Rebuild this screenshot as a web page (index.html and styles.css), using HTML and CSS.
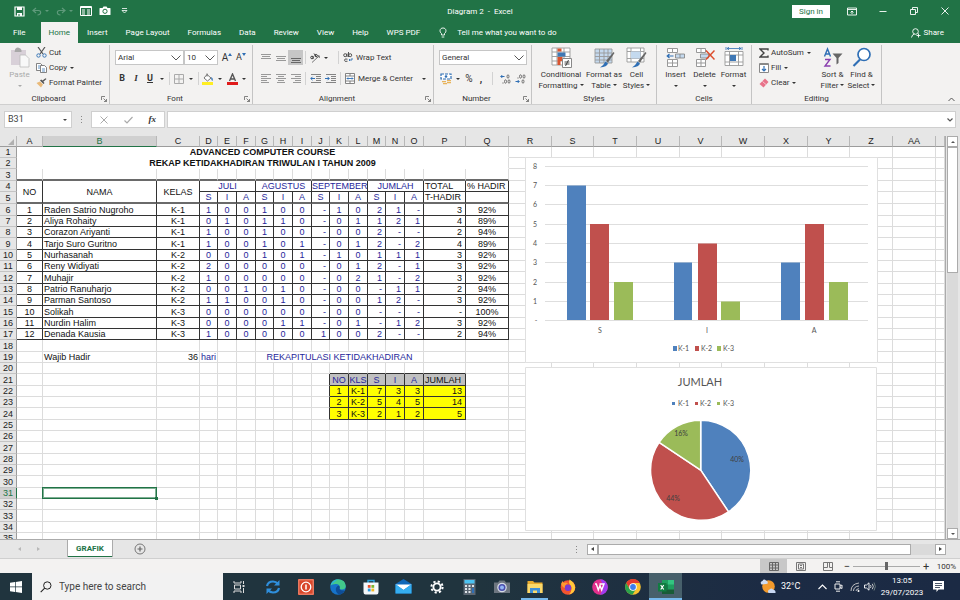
FILE: index.html
```html
<!DOCTYPE html>
<html lang="en">
<head>
<meta charset="utf-8">
<title>Diagram 2 - Excel</title>
<link rel="stylesheet" href="styles.css">
</head>
<body>
<header class="titlebar">
  <div class="quick">
    <button aria-label="Save"><svg width="11" height="11" viewBox="0 0 11 11"><path d="M1 1h9v9H1z" fill="none" stroke="#fff" stroke-width="1.2"/><path d="M3 1h5v3H3zM3 7h5v3H3z" fill="#fff"/><path d="M4.500 8h1v2h-1z" fill="#217346"/></svg></button>
    <button class="dim" aria-label="Undo"><svg width="10" height="9" viewBox="0 0 10 9"><path d="M4 1 1 3.500 4 6M1 3.500h5.500c3 0 3 4.500-1 4.500" fill="none" stroke="currentColor" stroke-width="1.200"/></svg><i class="caret"></i></button>
    <button class="dim" aria-label="Redo"><svg width="10" height="9" viewBox="0 0 10 9"><path d="M6 1l3 2.500L6 6M9 3.500H3.500C.5 3.500.5 8 4.500 8" fill="none" stroke="currentColor" stroke-width="1.200"/></svg><i class="caret"></i></button>
    <button aria-label="Form"><svg width="12" height="10" viewBox="0 0 12 10"><path d="M.5.5h11v9H.5z" fill="none" stroke="#fff"/><path d="M.5 1.500h11" stroke="#fff"/><path d="M2 4h3M2 6h3M2 8h3M7 4h3M7 6h3M7 8h3" stroke="#fff"/></svg></button>
    <button aria-label="Camera"><svg width="12" height="10" viewBox="0 0 12 10"><path d="M1 2h2.500L4.500.5h3L8.500 2H11q.5 0 .5.5v6q0 .5-.5.5H1q-.5 0-.5-.5v-6Q.5 2 1 2z" fill="#fff"/><circle cx="6" cy="5.300" r="2.100" fill="none" stroke="#217346"/></svg></button>
    <button aria-label="Customize"><svg width="7" height="6" viewBox="0 0 7 6"><path d="M1 .5h5M1 2.500h5L3.500 5z" fill="none" stroke="#fff" stroke-width=".8"/></svg></button>
  </div>
  <div class="doc-title">Diagram 2&nbsp; -&nbsp; Excel</div>
  <div class="window">
    <button class="signin">Sign in</button>
    <button aria-label="Ribbon display"><svg width="10" height="9" viewBox="0 0 10 9"><path d="M.5 1h9v7h-9zM.5 2.500h9M5 7V4M3.500 5.500 5 4l1.500 1.500" fill="none" stroke="#fff" stroke-width=".9"/></svg></button>
    <button aria-label="Minimize"><svg width="8" height="8" viewBox="0 0 8 8"><path d="M.5 4.500h7" stroke="#fff" stroke-width=".9"/></svg></button>
    <button aria-label="Restore"><svg width="8" height="8" viewBox="0 0 8 8"><path d="M.5 2.500h5v5h-5zM2.500 2.500v-2h5v5h-2" fill="none" stroke="#fff" stroke-width=".9"/></svg></button>
    <button aria-label="Close"><svg width="8" height="8" viewBox="0 0 8 8"><path d="M.5.5l7 7M7.500.5l-7 7" stroke="#fff" stroke-width=".9"/></svg></button>
  </div>
</header>
<nav class="tabs">
  <a href="#file" class="file">File</a>
  <a href="#home" class="active">Home</a>
  <a href="#insert">Insert</a>
  <a href="#layout">Page Layout</a>
  <a href="#formulas">Formulas</a>
  <a href="#data">Data</a>
  <a href="#review">Review</a>
  <a href="#view">View</a>
  <a href="#help">Help</a>
  <a href="#wps">WPS PDF</a>
  <a href="#tell" class="tell"><svg width="8" height="11" viewBox="0 0 8 11"><path d="M2.500 8V6.500C.2 5 .5 1 4 1s3.800 4 1.500 5.500V8zM2.700 10h2.600" fill="none" stroke="#fff" stroke-width=".9"/></svg>Tell me what you want to do</a>
  <a href="#share" class="share"><svg width="10" height="10" viewBox="0 0 10 10"><circle cx="4.500" cy="3.500" r="2.800" fill="none" stroke="#fff" stroke-width=".9"/><path d="M.5 9.500Q1 6.500 3.500 6M7.500 5.500v4M5.500 7.500h4" fill="none" stroke="#fff" stroke-width=".9"/></svg>Share</a>
</nav>

<section class="ribbon">
  <div class="group g-clip">
    <div class="body">
      <button class="big off"><svg width="20" height="21" viewBox="0 0 20 21"><path d="M1 3h15v15H1z" fill="#d8d0d8"/><path d="M5 3q0-2 3-2.500Q11 1 11.500 3v2H4.500z" fill="#a8a8a8"/><path d="M10 8h5.500l3.500 3.500V20h-9z" fill="#f8f8f8" stroke="#bbb" stroke-width=".8"/></svg><span>Paste</span><i class="caret"></i></button>
      <div class="stack">
        <button><svg width="11" height="11" viewBox="0 0 11 11"><path d="M2 0l5 7M9 0 4 7" stroke="#555" stroke-width="1.200"/><circle cx="2.500" cy="8.500" r="1.700" fill="none" stroke="#3b78b8"/><circle cx="8.500" cy="8.500" r="1.700" fill="none" stroke="#3b78b8"/></svg>Cut</button>
        <button><svg width="11" height="10" viewBox="0 0 11 10"><path d="M.5.500h4l1.500 1.500v5.500H.500z" fill="#fff" stroke="#666" stroke-width=".8"/><path d="M4.500 2.500h4l2 2V9.500h-6z" fill="#fff" stroke="#666" stroke-width=".8"/><path d="M2 3h2M2 5h2M6 6h3M6 8h3" stroke="#3b78b8" stroke-width=".8"/></svg>Copy<i class="caret far"></i></button>
        <button><svg width="11" height="10" viewBox="0 0 11 10"><path d="M.5 5 4 3.500 7 6.500 5 9.500z" fill="#e9b978"/><path d="M4 2.500 7.500 6l1-1-1.200-1.200L10.500 1 9.500.2 6.500 2.500 5.200 1.500z" fill="#555"/></svg>Format Painter</button>
      </div>
    </div>
    <div class="label has-launch">Clipboard<svg class="launch" width="6" height="6" viewBox="0 0 6 6"><path d="M.5 4V.5H4M2.500 2.500l3 3M5.500 3v2.500H3" fill="none" stroke="#666" stroke-width=".8"/></svg></div>
  </div>
  <div class="group g-font">
    <div class="body rows">
      <div class="row">
        <span class="combo c-name"><select aria-label="Font"><option>Arial</option></select><svg width="10" height="6" viewBox="0 0 10 6"><path d="M.5.5 5 5 9.500.5" fill="none" stroke="#444" stroke-width=".9"/></svg></span><span class="combo c-size"><select aria-label="Font size"><option>10</option></select><svg width="10" height="6" viewBox="0 0 10 6"><path d="M.5.5 5 5 9.500.5" fill="none" stroke="#444" stroke-width=".9"/></svg></span>
        <button class="ic grow" aria-label="Increase font">A<svg width="4" height="3" viewBox="0 0 4 3"><path d="M0 3l2-3 2 3z" fill="#2f6fb5"/></svg></button>
        <button class="ic shrink" aria-label="Decrease font">A<svg width="4" height="3" viewBox="0 0 4 3"><path d="M0 0l2 3 2-3z" fill="#2f6fb5"/></svg></button>
      </div>
      <div class="row">
        <button class="ic"><b>B</b></button><button class="ic"><b class="it">I</b></button><button class="ic"><b class="un">U</b></button><i class="ar caret"></i><i class="sep"></i>
        <button class="ic" aria-label="Borders"><svg width="10" height="10" viewBox="0 0 10 10"><path d="M.5.500h9v9h-9zM5 .5v9M.5 5h9" fill="none" stroke="#aaa"/></svg></button><i class="ar caret"></i><i class="sep"></i>
        <button class="ic" aria-label="Fill color"><svg width="12" height="12" viewBox="0 0 12 12"><path d="M5 1.500 9 5 5.500 8 2 5z" fill="#fff" stroke="#666" stroke-width=".9"/><path d="M5 .5v3" stroke="#666"/><path d="M9 4q2.500 1 1.500 4Q9 7 9 4z" fill="#2f6fb5"/><path d="M0 9h11v3H0z" fill="#ffee22"/></svg></button><i class="ar caret"></i>
        <button class="ic" aria-label="Font color"><svg width="11" height="12" viewBox="0 0 11 12"><path d="M2.500 8 5.500 1l3 7M3.500 6h4" fill="none" stroke="#555" stroke-width="1.400"/><path d="M0 9h11v3H0z" fill="#e01b1b"/></svg></button><i class="ar caret"></i>
      </div>
    </div>
    <div class="label has-launch">Font<svg class="launch" width="6" height="6" viewBox="0 0 6 6"><path d="M.5 4V.5H4M2.500 2.500l3 3M5.500 3v2.500H3" fill="none" stroke="#666" stroke-width=".8"/></svg></div>
  </div>
  <div class="group g-align">
    <div class="body rows">
      <div class="row">
        <button class="ic" aria-label="Top"><svg width="10" height="10" viewBox="0 0 10 10"><path d="M0 1.500h10M1 3.500h8M0 5.500h10" stroke="#999"/></svg></button><button class="ic" aria-label="Middle"><svg width="10" height="10" viewBox="0 0 10 10"><path d="M0 3.500h10M1 5.500h8M0 7.500h10" stroke="#999"/></svg></button><button class="ic on" aria-label="Bottom"><svg width="10" height="10" viewBox="0 0 10 10"><path d="M0 5.500h10M1 7.500h8M0 9.500h10" stroke="#666"/></svg></button><i class="sep"></i>
        <button class="ic" aria-label="Orientation"><svg width="11" height="10" viewBox="0 0 11 10"><path d="M2 9.500 9 3M7 2.800h2.300V5" fill="none" stroke="#666" stroke-width=".9"/><circle cx="2" cy="4.500" r="1.300" fill="none" stroke="#444"/><path d="M3 3v3M4 .5l3 4" stroke="#444"/><circle cx="6" cy="2.500" r="1.200" fill="none" stroke="#444" stroke-width=".9"/></svg></button><i class="ar caret"></i><i class="sep"></i>
        <button class="txt"><svg width="10" height="11" viewBox="0 0 10 11"><circle cx="2.200" cy="3.200" r="1.500" fill="none" stroke="#444" stroke-width=".9"/><path d="M4 1.500V5M5.500 0v5M4.500 7.200q-3-1-3 1t3 1" fill="none" stroke="#444" stroke-width=".9"/><circle cx="7.200" cy="3.200" r="1.500" fill="none" stroke="#444" stroke-width=".9"/><path d="M9 6v2H6M7 7 6 8l1 1" fill="none" stroke="#2f6fb5" stroke-width=".9"/></svg>Wrap Text</button>
      </div>
      <div class="row">
        <button class="ic" aria-label="Left"><svg width="10" height="9" viewBox="0 0 10 9"><path d="M0 .5h10M0 2.500h6M0 4.500h10M0 6.500h6M0 8.500h8" stroke="#999"/></svg></button><button class="ic" aria-label="Center"><svg width="10" height="9" viewBox="0 0 10 9"><path d="M0 .5h10M2 2.500h6M0 4.500h10M2 6.500h6M1 8.500h8" stroke="#999"/></svg></button><button class="ic" aria-label="Right"><svg width="10" height="9" viewBox="0 0 10 9"><path d="M0 .5h10M4 2.500h6M0 4.500h10M4 6.500h6M2 8.500h8" stroke="#999"/></svg></button><i class="sep"></i>
        <button class="ic" aria-label="Decrease indent"><svg width="11" height="9" viewBox="0 0 11 9"><path d="M1 .5h10M6 2.500h5M6 4.500h5M6 6.500h5M1 8.500h10" stroke="#777" stroke-width=".9"/><path d="M5 4.500H.8M2.500 2.800.8 4.500l1.700 1.700" fill="none" stroke="#2f6fb5"/></svg></button><button class="ic" aria-label="Increase indent"><svg width="11" height="9" viewBox="0 0 11 9"><path d="M1 .5h10M6 2.500h5M6 4.500h5M6 6.500h5M1 8.500h10" stroke="#777" stroke-width=".9"/><path d="M0 4.500h4.200M2.500 2.800l1.700 1.700-1.700 1.700" fill="none" stroke="#2f6fb5"/></svg></button><i class="sep"></i>
        <button class="txt"><svg width="10" height="11" viewBox="0 0 10 11"><path d="M.5.500h9v10h-9zM.5 3h9M.5 8h9M5 .5V3M5 8v2.500" fill="#fff" stroke="#777" stroke-width=".9"/><path d="M2 5.500h6M3 4.500l-1 1 1 1M7 4.500l1 1-1 1" fill="none" stroke="#2f6fb5" stroke-width=".9"/></svg>Merge &amp; Center<i class="caret far"></i></button>
      </div>
    </div>
    <div class="label has-launch">Alignment<svg class="launch" width="6" height="6" viewBox="0 0 6 6"><path d="M.5 4V.5H4M2.500 2.500l3 3M5.500 3v2.500H3" fill="none" stroke="#666" stroke-width=".8"/></svg></div>
  </div>
  <div class="group g-num">
    <div class="body rows">
      <div class="row"><span class="combo c-fmt"><select aria-label="Number format"><option>General</option></select><svg width="10" height="6" viewBox="0 0 10 6"><path d="M.5.5 5 5 9.500.5" fill="none" stroke="#444" stroke-width=".9"/></svg></span></div>
      <div class="row">
        <button class="ic" aria-label="Currency"><svg width="13" height="12" viewBox="0 0 13 12"><path d="M1 1h10v5H1z" fill="#fff" stroke="#2f6fb5" stroke-width="1.200" stroke-dasharray="3 1"/><circle cx="6" cy="3.500" r="1.300" fill="#2f6fb5"/><path d="M7 7h4v1.200H7zM7 9h4v1.200H7zM2 8h4v1.200H2zM3 10h4v1.200H3z" fill="#e8b35a"/></svg></button><i class="ar caret"></i>
        <button class="ic sym">%</button><button class="ic sym"><b>,</b></button><i class="sep"></i>
        <button class="ic dec" aria-label="Increase decimal"><svg width="11" height="10" viewBox="0 0 11 10"><path d="M4.500 2.500H.8M2.300 1 .8 2.500 2.300 4" fill="none" stroke="#2f6fb5"/><ellipse cx="8" cy="2.500" rx="1" ry="1.700" fill="none" stroke="#555" stroke-width=".8"/><ellipse cx="5.500" cy="7.500" rx="1" ry="1.700" fill="none" stroke="#555" stroke-width=".8"/><ellipse cx="9" cy="7.500" rx="1" ry="1.700" fill="none" stroke="#555" stroke-width=".8"/><path d="M2.500 9h1" stroke="#555"/></svg></button><button class="ic dec" aria-label="Decrease decimal"><svg width="11" height="10" viewBox="0 0 11 10"><path d="M.5 7.500h3.700M2.700 6l1.500 1.500L2.700 9" fill="none" stroke="#2f6fb5"/><ellipse cx="8" cy="7.500" rx="1" ry="1.700" fill="none" stroke="#555" stroke-width=".8"/><ellipse cx="5.500" cy="2.500" rx="1" ry="1.700" fill="none" stroke="#555" stroke-width=".8"/><ellipse cx="9" cy="2.500" rx="1" ry="1.700" fill="none" stroke="#555" stroke-width=".8"/><path d="M2.500 4h1" stroke="#555"/></svg></button>
      </div>
    </div>
    <div class="label has-launch">Number<svg class="launch" width="6" height="6" viewBox="0 0 6 6"><path d="M.5 4V.5H4M2.500 2.500l3 3M5.500 3v2.500H3" fill="none" stroke="#666" stroke-width=".8"/></svg></div>
  </div>
  <div class="group g-styles">
    <div class="body bigs">
      <button class="big b-wide"><svg width="21" height="21" viewBox="0 0 21 21"><path d="M1 1h18v17H1zM1 5h18M1 9.500h18M1 14h18M6 1v17M13 1v17" fill="#fff" stroke="#999" stroke-width=".9"/><path d="M6.500 1.500h4v3h-4zM6.500 10h5v4h-5zM6.500 14h3v4h-3z" fill="#d9542f"/><path d="M6.500 5.500h8v4h-8z" fill="#3f78b5"/><path d="M11.500 11.500h9v9h-9z" fill="#fff" stroke="#888"/><path d="M13.500 15h5M13.500 17h5M17.500 13l-3 6" stroke="#333" stroke-width=".9"/></svg><span>Conditional<br>Formatting<i class="caret"></i></span></button>
      <button class="big b-mid"><svg width="21" height="21" viewBox="0 0 21 21"><path d="M1 2h17v14H1z" fill="#c4d9ee"/><path d="M1 2h17v14H1zM1 6h17M1 9.500h17M1 13h17M5.500 2v14M10 2v14M14 2v14" fill="none" stroke="#999" stroke-width=".9"/><path d="M19.500 5l1 1-6.500 9.500-2-1.500z" fill="#666"/><path d="M11.500 14.500l2.500 2q-1 3.500-8 4 3.500-2 5.500-6z" fill="#2f6fb5"/></svg><span>Format as<br>Table<i class="caret"></i></span></button>
      <button class="big b-slim"><svg width="21" height="21" viewBox="0 0 21 21"><path d="M1 1h17v14H1zM1 4.500h17M1 11.500h17M5 1v14M14.500 1v14" fill="#fff" stroke="#999" stroke-width=".9"/><path d="M5 4.500h9.500v7H5z" fill="#c4d9ee"/><path d="M19.500 5l1 1-6.500 9.500-2-1.500z" fill="#666"/><path d="M11.500 14.500l2.500 2q-1 3.500-8 4 3.500-2 5.500-6z" fill="#2f6fb5"/></svg><span>Cell<br>Styles<i class="caret"></i></span></button>
    </div>
    <div class="label">Styles</div>
  </div>
  <div class="group g-cells">
    <div class="body bigs">
      <button class="big b-slim"><svg width="20" height="21" viewBox="0 0 20 21"><path d="M1.500 1.500h10v4h-10zM6.500 1.500v4M1.500 12.500h10v7h-10zM6.500 12.500v7M1.500 16h10" fill="#fff" stroke="#999"/><path d="M9.500 7h9v4h-9zM14 7v4" fill="#c4d9ee" stroke="#888" stroke-width=".9"/><path d="M7.500 9H1.200M3.500 7 1.200 9l2.300 2" fill="none" stroke="#2f6fb5" stroke-width="1.200"/></svg><span>Insert</span><i class="caret"></i></button>
      <button class="big b-slim"><svg width="20" height="21" viewBox="0 0 20 21"><path d="M1.500 1.500h9v4h-9zM6 1.500v4M1.500 12.500h9v7h-9zM6 12.500v7M1.500 16h9" fill="#fff" stroke="#999"/><path d="M5.500 7h8v4h-8z" fill="#c4d9ee" stroke="#888" stroke-width=".9"/><path d="M11 3.500l8.500 9M19.500 3.500l-8.500 9" stroke="#dc4c2c" stroke-width="1.500"/></svg><span>Delete</span><i class="caret"></i></button>
      <button class="big b-slim"><svg width="20" height="21" viewBox="0 0 20 21"><path d="M1 4.500h18v14H1zM1 8h18M1 15h18M5.500 4.500v14M14.500 4.500v14" fill="#fff" stroke="#999" stroke-width=".9"/><path d="M6 8h6v6H6z" fill="#3f78b5"/><path d="M3 1.500h14M5 .2 3 1.500l2 1.300M15 .2l2 1.300-2 1.300M2 0v3M18 0v3" fill="none" stroke="#2f6fb5" stroke-width=".8"/></svg><span>Format</span><i class="caret"></i></button>
    </div>
    <div class="label">Cells</div>
  </div>
  <div class="group g-edit">
    <div class="body bigs">
      <div class="stack">
        <button><svg width="10" height="10" viewBox="0 0 10 10"><path d="M9 2.500V1H1l4 4-4 4h8V7.500" fill="none" stroke="#444" stroke-width="1.400"/></svg>AutoSum<i class="caret far"></i></button>
        <button><svg width="10" height="10" viewBox="0 0 10 10"><path d="M.5.500h9v9h-9z" fill="#fff" stroke="#888"/><path d="M.5 1.500h9" stroke="#888"/><path d="M5 3v5M3 6l2 2 2-2" fill="none" stroke="#2f6fb5" stroke-width="1.200"/></svg>Fill<i class="caret"></i></button>
        <button><svg width="10" height="10" viewBox="0 0 10 10"><path d="M6 .5 9.500 4 4.500 9.500 .5 6z" fill="#e8738a"/><path d="M3.500 3.500 7 6.500" stroke="#fff" stroke-width=".6"/></svg>Clear<i class="caret"></i></button>
      </div>
      <button class="big b-slim"><svg width="20" height="21" viewBox="0 0 20 21"><path d="M1.500 9.500 4.500 2l3 7.500M2.500 7h4" fill="none" stroke="#2f6fb5" stroke-width="1.400"/><path d="M2 12.500h5L2 19h5.500" fill="none" stroke="#8a3fae" stroke-width="1.400"/><path d="M9.500 6.500h10l-4 4.500v5l-2 1.500V11z" fill="#666"/></svg><span>Sort &amp;<br>Filter<i class="caret"></i></span></button>
      <button class="big b-slim"><svg width="20" height="21" viewBox="0 0 20 21"><circle cx="12" cy="7.500" r="6" fill="#fff" stroke="#2f6fb5" stroke-width="1.700"/><path d="M8 12.500 1.500 19" stroke="#2f6fb5" stroke-width="2.200"/></svg><span>Find &amp;<br>Select<i class="caret"></i></span></button>
    </div>
    <div class="label">Editing</div>
  </div>
  <button class="collapse" aria-label="Collapse ribbon"><svg width="7" height="5" viewBox="0 0 7 5"><path d="M.5 4l3-3 3 3" fill="none" stroke="#555"/></svg></button>
</section>

<section class="formula">
  <div class="namebox"><input aria-label="Name box" value="B31"><i class="caret"></i></div>
  <div class="dots"><i></i><i></i><i></i></div>
  <div class="fx">
    <button aria-label="Cancel"><svg width="8" height="8" viewBox="0 0 8 8"><path d="M.5.5l7 7M7.500.5l-7 7" stroke="#aaa"/></svg></button>
    <button aria-label="Enter"><svg width="9" height="8" viewBox="0 0 9 8"><path d="M.5 4.500 3 7 8.500 1" fill="none" stroke="#aaa" stroke-width="1.200"/></svg></button>
    <button class="fn">fx</button>
  </div>
  <div class="entry"><input aria-label="Formula bar"><svg width="6" height="4" viewBox="0 0 6 4"><path d="M.5.5 3 3 5.500.5" fill="none" stroke="#555" stroke-width="1.200"/></svg></div>
</section>

<main class="work">
  <div class="sheet">
    <table id="grid"></table>
    <svg class="chart bars" width="353" height="206" viewBox="0 0 353 206">
      <path d="M.5 0v205.500h352V0M0 .5h353" fill="#fff" stroke="#e0e0e0"/>
      <path d="M20 9.500h323M20 28.500h323M20 47.500h323M20 67.500h323M20 86.500h323M20 105.500h323M20 125.500h323M20 144.500h323M20 163.500h323" stroke="#dedede"/>
      <g fill="#4f81bd"><path d="M42 28.500h19V163H42zM149 105.500h18V163h-18zM256 105.500h19V163h-19z"/></g>
      <g fill="#c0504d"><path d="M65 67h19v96H65zM173 86.500h19V163h-19zM280 67h19v96h-19z"/></g>
      <g fill="#9bbb59"><path d="M89 125h19v38H89zM196 144.500h19V163h-19zM304 125h19v38h-19z"/></g>
      <g class="axis" text-anchor="middle"><text x="10" y="12">8</text><text x="10" y="31">7</text><text x="10" y="50">6</text><text x="10" y="70">5</text><text x="10" y="89">4</text><text x="10" y="108">3</text><text x="10" y="128">2</text><text x="10" y="147">1</text><text x="11" y="166">-</text><text x="75" y="176">S</text><text x="182" y="176">I</text><text x="289" y="176">A</text></g>
      <path d="M148 189h4v5h-4z" fill="#4f81bd"/><path d="M170 189h4v5h-4z" fill="#c0504d"/><path d="M192 189h4v5h-4z" fill="#9bbb59"/>
      <g class="axis"><text x="153" y="194">K-1</text><text x="176" y="194">K-2</text><text x="198" y="194">K-3</text></g>
    </svg>
    <svg class="chart pie" width="353" height="164" viewBox="0 0 353 164">
      <path d="M.5.500h351v163H.500z" fill="#fff" stroke="#e0e0e0"/>
      <text class="pie-title" x="175" y="19" text-anchor="middle">JUMLAH</text>
      <path d="M147 35h3v3h-3z" fill="#4f81bd"/><path d="M170 35h3v3h-3z" fill="#c0504d"/><path d="M192 35h3v3h-3z" fill="#9bbb59"/>
      <g class="axis"><text x="153" y="39">K-1</text><text x="175" y="39">K-2</text><text x="198" y="39">K-3</text></g>
      <g stroke="#fff" stroke-width="1.500" stroke-linejoin="round">
        <path d="M175.700 103.200V53.200A50 50 0 0 1 203.500 144.800z" fill="#4f81bd"/>
        <path d="M175.700 103.200 203.500 144.800A50 50 0 0 1 134.100 75.400z" fill="#c0504d"/>
        <path d="M175.700 103.200 134.100 75.400A50 50 0 0 1 175.700 53.200z" fill="#9bbb59"/>
      </g>
      <g class="slice" text-anchor="middle"><text x="212" y="95">40%</text><text x="148" y="134">44%</text><text x="156" y="69">16%</text></g>
    </svg>
  </div>
  <div class="vscroll">
    <button aria-label="Scroll up"><i class="up"></i></button>
    <div class="track"><div class="thumb"></div></div>
    <button aria-label="Scroll down"><i class="caret"></i></button>
  </div>
</main>

<section class="sheettabs">
  <div class="arrows"><i class="lf"></i><i class="rt"></i></div>
  <button class="tab">GRAFIK</button>
  <button class="add" aria-label="New sheet"><svg width="12" height="12" viewBox="0 0 12 12"><circle cx="6" cy="6" r="5" fill="none" stroke="#777"/><path d="M3.500 6h5M6 3.500v5" stroke="#666" stroke-width="1.200"/></svg></button>
  <div class="dots"><i></i><i></i><i></i></div>
  <div class="hscroll">
    <button aria-label="Scroll left"><i class="lf"></i></button>
    <div class="htrack"><div class="hthumb"></div></div>
    <button aria-label="Scroll right"><i class="rt"></i></button>
  </div>
</section>

<section class="status">
  <button class="view on" aria-label="Normal"><svg width="10" height="9" viewBox="0 0 10 9"><path d="M.5.500h9v8h-9zM.5 3h9M.5 6h9M3.500.5v8M6.500.5v8" fill="none" stroke="#666"/></svg></button>
  <button class="view" aria-label="Page layout"><svg width="10" height="9" viewBox="0 0 10 9"><path d="M.5.500h9v8h-9zM2.500 2h5v5h-5zM4 3.500h2M4 5.500h2" fill="none" stroke="#777"/></svg></button>
  <button class="view" aria-label="Page break"><svg width="10" height="9" viewBox="0 0 10 9"><path d="M.5.500h9v8h-9zM.5 5.500h4v-5M6.500.5v5h3" fill="none" stroke="#777"/></svg></button>
  <button class="zm">−</button>
  <input type="range" aria-label="Zoom" min="0" max="100" value="50">
  <button class="zm">+</button>
  <span class="pct">100%</span>
</section>

<footer class="taskbar">
  <button class="start" aria-label="Start"><svg width="12" height="12" viewBox="0 0 12 12"><path d="M0 1.700 5 1v4.600H0zM5.700.9 12 0v5.600H5.700zM0 6.300h5V11l-5-.7zM5.700 6.300H12V12l-6.300-.9z" fill="#fff"/></svg></button>
  <label class="search"><svg width="12" height="12" viewBox="0 0 12 12"><circle cx="7.300" cy="4.500" r="3.700" fill="none" stroke="#222"/><path d="M4.700 7.200.7 11.200" stroke="#222" stroke-width="1.100"/></svg><input type="text" placeholder="Type here to search" aria-label="Search"></label>
  <div class="apps">
    <button aria-label="Task view"><svg width="13" height="12" viewBox="0 0 13 12"><path d="M1 0v2h7V0M1 12v-2h7v2M1.500 4h6v4h-6zM10.500 0v3M10.500 7v5" fill="none" stroke="#ddd"/><path d="M9.500 4h2v2h-2z" fill="#ddd"/></svg></button>
    <button aria-label="Sync"><svg width="16" height="16" viewBox="0 0 16 16"><path d="M2 7Q3 2.500 8 2.500q3 0 5 2.500M14 9q-1 4.500-6 4.500-3 0-5-2.500" fill="none" stroke="#2f8fdc" stroke-width="2.200"/><path d="M14.500 1v5.500H9zM1.500 15V9.500H7z" fill="#2f8fdc"/></svg></button>
    <button aria-label="Power"><svg width="16" height="16" viewBox="0 0 16 16"><path d="M0 0h16v16H0z" fill="#d9472b"/><path d="M.8.800h14.400v14.400H.8z" fill="none" stroke="#f0a28e" stroke-width=".8"/><circle cx="8" cy="8" r="4.800" fill="none" stroke="#fff" stroke-width="1.300"/><path d="M8 5.500v5" stroke="#fff" stroke-width="1.500"/></svg></button>
    <button aria-label="Edge"><svg width="16" height="16" viewBox="0 0 16 16"><circle cx="8" cy="8" r="7.800" fill="#1673c9"/><path d="M.5 6.500Q2 0 8.500.2 15.500 1 15.800 7q-.2 3.500-4 3.500-3 0-2-2.500Q9 4.500 5.500 5 2 5.300.5 6.500z" fill="#42c98b"/><path d="M.5 6.500Q2 1 8 .2 4 3 .5 6.500z" fill="#2bb5d9"/><path d="M9.800 8q-1.500 4 5 3.500Q13 15 9 15.700 5 13 6 9q1-2.500 3-2.500z" fill="#0e4d96"/></svg></button>
    <button aria-label="Store"><svg width="16" height="16" viewBox="0 0 16 16"><path d="M5 4V1.500h6V4" fill="none" stroke="#2aa5e0" stroke-width="1.400"/><path d="M.5 3.500h15V13q0 2.500-2 2.500h-11q-2 0-2-2.500z" fill="#f4f7fa"/><path d="M4.800 6h2.800v2.800H4.800z" fill="#e8502c"/><path d="M8.400 6h2.800v2.800H8.400z" fill="#7cb62c"/><path d="M4.800 9.600h2.800v2.800H4.800z" fill="#2b9be0"/><path d="M8.400 9.600h2.800v2.800H8.400z" fill="#f5b820"/></svg></button>
    <button aria-label="Mail"><svg width="17" height="15" viewBox="0 0 17 15"><path d="M.5 5 8.500 0l8 5v9.500H.5z" fill="#1068b8"/><path d="M.5 5.500h16L8.500 11z" fill="#fff"/><path d="M.5 5v9.500h16V5l-8 6z" fill="#35aef0"/></svg></button>
    <button aria-label="Settings"><svg width="14" height="14" viewBox="0 0 14 14"><circle cx="7" cy="7" r="3.600" fill="none" stroke="#fff" stroke-width="1.900"/><circle cx="7" cy="7" r="5.600" fill="none" stroke="#fff" stroke-width="2" stroke-dasharray="2.200 2.200"/></svg></button>
    <button aria-label="Calculator"><svg width="13" height="16" viewBox="0 0 13 16"><path d="M.5 0h12v16H.5z" fill="#5a6672"/><path d="M1.500 1h10v3.500h-10z" fill="#4cc2f1"/><path d="M2 6h2v2H2zM5.500 6h2v2h-2zM9 6h2v2H9zM2 9h2v2H2zM5.500 9h2v2h-2zM2 12h2v2H2zM5.500 12h2v2h-2z" fill="#dfe5ea"/><path d="M9 9h2v5H9z" fill="#2f6fb5"/></svg></button>
    <button aria-label="Camera app"><svg width="16" height="14" viewBox="0 0 16 14"><path d="M0 2.500h4L5.500.5h5l1.500 2h4V13H0z" fill="#6d7680"/><circle cx="8" cy="7.500" r="4.800" fill="#d5dbe5"/><circle cx="8" cy="7.500" r="3.500" fill="#4a4fae"/><circle cx="8" cy="7.500" r="2" fill="#93b6f5"/></svg></button>
    <button class="open" aria-label="File Explorer"><svg width="16" height="14" viewBox="0 0 16 14"><path d="M.5 1H6l1.500 1.500h8V13H.5z" fill="#e9ac2f"/><path d="M.5 4h15v9H.5z" fill="#fbd96b"/><path d="M3 13V8h10v5h-3v-2.500H6V13z" fill="#3f8fd8"/></svg></button>
    <button aria-label="Firefox"><svg width="16" height="16" viewBox="0 0 16 16"><circle cx="8" cy="8.500" r="7.300" fill="#f4552f"/><path d="M9.500.5Q15 4 15.200 8.500 15 14 9 15.500 14 10 9.500 5 8.500 3 9.500.5z" fill="#ffc93a"/><path d="M1 5 2.500 2l1.200 2Q6 3 8 4.500 4.500 6 5 9 3 9 1 5z" fill="#ff9a2e"/><circle cx="8" cy="8.800" r="3.200" fill="#7a3bd0"/></svg></button>
    <button aria-label="WPS Office"><svg width="16" height="16" viewBox="0 0 16 16"><circle cx="8" cy="8" r="7.800" fill="#e1308c"/><path d="M8 .2A7.800 7.800 0 0 1 8 15.800Q14 8 8 .2z" fill="#a03bf0"/><path d="M3 5h1.300L6.300 11 8 6.500 9.700 11 12 5H7.500" fill="none" stroke="#fff" stroke-width="1.400"/></svg></button>
    <button aria-label="Chrome"><svg width="16" height="16" viewBox="0 0 16 16"><circle cx="8" cy="8" r="7.800" fill="#f9c22e"/><path d="M1.200 4.100A7.800 7.800 0 0 1 14.800 4.100H8L4.600 10z" fill="#e33b2e"/><path d="M1.200 4.100A7.800 7.800 0 0 0 7.500 15.800L11 10 8 11.500 4.600 10z" fill="#2ba24c"/><circle cx="8" cy="8" r="3.800" fill="#fff"/><circle cx="8" cy="8" r="2.900" fill="#3b7ded"/></svg></button>
    <button class="open current" aria-label="Excel"><svg width="16" height="14" viewBox="0 0 16 14"><path d="M4 0h12v14H4z" fill="#1f9e5f"/><path d="M10 0h6v4.500h-6z" fill="#33c481"/><path d="M4 4.500h6v5H4z" fill="#18794a"/><path d="M4 9.500h12V14H4z" fill="#185c37"/><path d="M0 3h8.500v8.500H0z" fill="#107c41"/><path d="M2.700 5l3 4.500M5.700 5l-3 4.500" stroke="#fff" stroke-width="1.200"/></svg></button>
  </div>
  <div class="tray">
    <svg width="16" height="15" viewBox="0 0 16 15"><circle cx="8.500" cy="7.500" r="6.300" fill="#f39a2c"/><path d="M1.500 5.500q-2-2.500.8-3.500Q4-.5 6 1.500q2.500.5 1.500 3.200z" fill="#cfdcf2"/><path d="M8.500 14q-1.500-2.500 1-3.500 2-2 3.500 0 3 .5 2.500 3.500z" fill="#c9d8f2"/></svg>
    <span class="temp">32°C</span>
    <svg width="9" height="6" viewBox="0 0 9 6"><path d="M.5 5l4-4 4 4" fill="none" stroke="#fff" stroke-width="1.100"/></svg>
    <svg class="meet" width="9" height="11" viewBox="0 0 9 11"><path d="M1 3h5v5H1zM6 5l2-1v3.500l-2-1M2 .8h4M2 10.200h4" fill="none" stroke="#eee"/></svg>
    <svg width="10" height="10" viewBox="0 0 10 10"><path d="M1 9Q1 2 9 1M3.500 9q0-4.500 5.500-5M6 9q0-2 3-2.300" fill="none" stroke="#ccc" stroke-width=".9"/><circle cx="8.500" cy="9" r="1" fill="#fff"/></svg>
    <svg width="12" height="9" viewBox="0 0 12 9"><path d="M.5 3h2L5 .800v7.400L2.500 6h-2z" fill="none" stroke="#fff" stroke-width=".9"/><path d="M6.500 3q1 1.500 0 3M8.300 1.800q2 2.700 0 5.400" fill="none" stroke="#ddd" stroke-width=".9"/><path d="M10 .5q2.700 4 0 8" fill="none" stroke="#788" stroke-width=".9"/></svg>
    <div class="clock"><span>13:05</span><span>29/07/2023</span></div>
    <svg class="note" width="11" height="11" viewBox="0 0 11 11"><path d="M0 0h11v8.500H5.500L3.500 11V8.500H0z" fill="#fff"/><path d="M2 2.500h7M2 4.500h7M2 6.500h5" stroke="#1d2c42" stroke-width=".8"/></svg>
  </div>
</footer>
<script src="app.js"></script>
</body>
</html>
```
FILE: styles.css
```css
* { box-sizing: border-box; }
html, body { height: 100%; }
body {
  margin: 0;
  display: flex;
  flex-direction: column;
  background: #e6e6e6;
  color: #333;
  font: 8px/11px Roboto, "Open Sans", sans-serif;
  overflow: hidden;
}
button {
  display: flex; align-items: center; justify-content: center;
  margin: 0; padding: 0; border: 0; background: none;
  color: inherit; font: inherit; white-space: nowrap;
}
input, select { font: inherit; color: inherit; border: 0; margin: 0; padding: 0; background: none; min-width: 0; }
a { color: inherit; text-decoration: none; }
svg { display: block; flex: none; }
.caret { flex: none; width: 0; height: 0; border: 2px solid transparent; border-top-color: currentColor; border-bottom: 0; }

/* Title bar */
.titlebar { display: grid; grid-template-columns: 1fr auto 1fr; align-items: center; height: 22px; flex: none; background: #217346; color: #fff; }
.quick { display: flex; align-items: center; padding-left: 13px; gap: 7px; }
.quick button { gap: 4px; min-width: 12px; }
.quick .dim { color: #5f9a7b; gap: 3px; }
.window { display: flex; justify-content: flex-end; align-items: center; }
.window button { width: 31px; height: 20px; }
.window .signin { width: 38px; height: 13px; background: #fff; color: #217346; margin-right: 6px; }

/* Ribbon tabs */
.tabs { display: flex; height: 21px; flex: none; background: #217346; color: #fff; }
.tabs a { display: flex; align-items: center; padding: 0 9px; white-space: nowrap; }
.tabs .file { padding: 0 15px 0 13px; }
.tabs .active { background: #f3f2f1; color: #217346; padding: 0 8px; }
.tabs .tell { padding-left: 10px; gap: 10px; }
.tabs .share { margin-left: auto; padding-right: 16px; gap: 3px; }

/* Ribbon */
.ribbon { display: flex; height: 62px; flex: none; background: #f3f2f1; border-bottom: 1px solid #cfcfcf; }
.group { display: flex; flex-direction: column; border-right: 1px solid #c4c4c4; margin: 2px 0 0; flex: none; }
.body { display: flex; flex: 1; min-height: 0; }
.label { position: relative; text-align: center; height: 11px; flex: none; }
.has-launch { padding-right: 12px; }
.launch { position: absolute; right: 2px; top: 3px; }
.g-clip { width: 110px; }
.g-font { width: 143px; }
.g-align { width: 181px; }
.g-num { width: 98px; }
.g-styles { width: 125px; }
.g-cells { width: 95px; }
.g-edit { width: 130px; }
.big { flex-direction: column; justify-content: flex-start; line-height: 11px; padding-top: 2px; gap: 1px; }
.big .caret { display: inline-block; margin: 0 0 2px 2px; }
.big > .caret { margin: 4px 0 0; }
.g-clip .big { width: 33px; margin-left: 3px; }
.off { color: #aaa; }
.stack { display: flex; flex-direction: column; align-items: flex-start; }
.stack button { height: 15px; gap: 2px; }
.stack button .caret { margin-left: 1px; }
.stack .far, .txt .far { margin-left: 6px; }
.rows { flex-direction: column; padding: 5px 0 0 5px; gap: 6px; }
.row { display: flex; align-items: center; height: 15px; }
.combo { position: relative; display: block; height: 15px; background: #fff; border: 1px solid #c6c6c6; }
.combo select { appearance: none; width: 100%; height: 13px; padding-left: 2px; line-height: 13px; display: block; }
.combo svg { position: absolute; right: 2px; top: 4px; }
.c-name { width: 69px; }
.c-size { width: 34px; }
.c-fmt { width: 88px; }
.ic { width: 14px; height: 15px; flex: none; font-size: 9px; }
.g-align .ic { width: 15px; }
.ic.on { background: #c6c6c6; }
.grow, .shrink { align-items: center; }
.grow { font-size: 10px; margin-left: 2px; }
.grow svg, .shrink svg { margin-bottom: 6px; }
.it { font-style: italic; font-family: "Liberation Serif", serif; }
.un { text-decoration: underline; }
.ar { margin: 0 3px; }
.g-align .ar { margin: 0 8px 0 1px; }
.sep { width: 1px; height: 13px; background: #d2d2d2; margin: 0 2px; flex: none; }
.txt { gap: 3px; padding-left: 2px; }
.sym { width: 12px; font-size: 10px; }
.g-num .dec { width: 15px; }
.g-num .sep { margin: 0 5px; }
.b-wide { width: 50px; }
.b-mid { width: 36px; }
.b-slim { width: 29px; }
.g-styles .bigs, .g-cells .bigs { padding-left: 4px; }
.g-edit .bigs { padding-left: 7px; }
.g-edit .stack { width: 59px; }
.collapse { margin: auto 5px 2px auto; }

/* Formula bar */
.formula { display: flex; height: 31px; flex: none; padding: 6px 4px 8px; align-items: stretch; }
.namebox, .fx, .entry { display: flex; align-items: center; background: #fff; border: 1px solid #cfcfcf; }
.namebox { width: 68px; padding: 0 4px 0 3px; font-size: 9px; color: #444; }
.namebox input { flex: 1; width: 20px; }
.dots { display: flex; flex-direction: column; justify-content: center; gap: 2px; margin: 0 9px; }
.dots i { width: 1px; height: 1px; background: #888; }
.fx { width: 74px; justify-content: space-around; }
.fn { font: italic bold 9px/11px "Liberation Serif", serif; }
.entry { flex: 1; margin-left: 2px; padding-right: 2px; }
.entry input { flex: 1; }

/* Sheet */
.work { display: flex; flex: 1; min-height: 0; border-bottom: 1px solid #ababab; }
.sheet { position: relative; flex: 1; min-width: 0; overflow: hidden; background: #fff; border-right: 1px solid #ababab; }
table { table-layout: fixed; width: 100%; border-spacing: 0; font: 9px/10px "Liberation Sans", Arial, sans-serif; color: #111; }
th, td { padding: 0; height: 11px; border-right: 1px solid #dcdcdc; border-bottom: 1px solid #dcdcdc; white-space: nowrap; overflow: hidden; text-align: center; font-weight: normal; }
tbody tr:nth-child(3n) > * { height: 12px; }
th { background: #e6e6e6; color: #222; }
thead th { border-color: #b8b8b8; border-bottom-color: #9c9c9c; }
tbody th { border-color: #c4c4c4; border-right-color: #9c9c9c; }
thead .hot { background: #d0d0d0; border-bottom-color: #217346; color: #217346; }
tbody .hot { background: #d0d0d0; border-right-color: #217346; color: #217346; }
.corner { position: relative; }
.corner i { position: absolute; right: 2px; bottom: 1px; border: 3px solid #b0b0b0; border-top-color: transparent; border-left-color: transparent; }
td.heading { font-weight: bold; border-bottom-color: #fff; }
td.box { border-color: #333; }
td.topline { border-bottom: 2px solid #6a6a6a; }
td.baseline { border-bottom: 2px solid #6a6a6a; }
td.edge-right { border-right-color: #333; }
td.edge-bottom { border-bottom-color: #333; }
td.blue { color: #26269a; }
td.left { text-align: left; padding-left: 1px; }
td.right { text-align: right; padding-right: 3px; }
td.close { padding-right: 1px; }
td.plain { overflow: visible; }
td.grey { background: #c0c0c0; }
td.yellow { background: #ff0; }
td.selected { position: relative; overflow: visible; }
td.selected::before { content: ""; position: absolute; inset: -1px; border: 1px solid #217346; outline: 1px solid #7fb094; outline-offset: -2px; }
td.selected::after { content: ""; position: absolute; right: -2px; bottom: -2px; width: 3px; height: 3px; background: #217346; }
.chart { position: absolute; left: 525px; }
.bars { top: 21px; }
.pie { top: 231px; }
.axis { font: 7px Lato, sans-serif; fill: #555; }
.slice { font: 7px Lato, sans-serif; fill: #404040; }
.pie-title { font: 11px Lato, sans-serif; fill: #555; }

.vscroll { display: flex; flex-direction: column; width: 14px; padding: 0 2px 0 1px; flex: none; }
.vscroll button, .hscroll button { width: 11px; height: 11px; background: #fff; border: 1px solid #ababab; flex: none; color: #555; }
.track { flex: 1; background: #dadada; }
.thumb { width: 11px; height: 33%; background: #fff; border: 1px solid #ababab; }
.up { border: 2px solid transparent; border-bottom-color: #555; border-top: 0; }
.lf { border: 2px solid transparent; border-right: 3px solid #444; border-left: 0; }
.rt { border: 2px solid transparent; border-left: 3px solid #444; border-right: 0; }

/* Sheet tabs */
.sheettabs { display: flex; align-items: center; height: 19px; flex: none; border-bottom: 1px solid #cfcfcf; }
.arrows { display: flex; gap: 16px; width: 67px; padding-left: 18px; }
.arrows .lf { border-right-color: #b8b8b8; }
.arrows .rt { border-left-color: #b8b8b8; }
.tab { align-self: flex-start; width: 46px; height: 17px; background: #fff; border: solid #ababab; border-width: 0 1px; box-shadow: inset 0 -1px #217346; color: #217346; font-weight: bold; }
.add { margin-left: 21px; }
.sheettabs .dots { margin: 0 10px 0 auto; }
.hscroll { display: flex; width: 359px; margin-right: 14px; }
.htrack { flex: 1; background: #dadada; }
.hthumb { width: 93%; height: 11px; background: #fff; border: 1px solid #ababab; }

/* Status bar */
.status { display: flex; justify-content: flex-end; align-items: center; height: 14px; flex: none; background: #f3f2f1; padding-right: 4px; }
.view { width: 27px; height: 14px; }
.view.on { background: #c8c8c8; }
.zm { width: 12px; font-size: 11px; }
.status input { appearance: none; width: 67px; height: 13px; background: linear-gradient(#aaa, #aaa) center / 100% 1px no-repeat; }
.status input::-webkit-slider-thumb { appearance: none; width: 3px; height: 8px; background: #666; }
.pct { width: 24px; text-align: right; }

/* Taskbar */
.taskbar { display: flex; height: 27px; flex: none; background: linear-gradient(90deg, #20343e, #20343e 50%, #1c2b44 80%, #1b2a44); color: #fff; }
.start { width: 32px; }
.search { display: flex; align-items: center; gap: 7px; width: 191px; padding-left: 8px; background: #f2f2f2; color: #444; font-size: 10px; }
.search input { flex: 1; }
.search input::placeholder { color: #444; opacity: 1; }
.apps { display: flex; }
.apps button { width: 33px; }
.apps button:nth-child(4n) { width: 32px; }
.apps .open { background: linear-gradient(#76b9ed, #76b9ed) bottom / 27px 2px no-repeat; }
.apps .current { background: linear-gradient(#76b9ed, #76b9ed) bottom / 100% 2px no-repeat, #47606b; }
.tray { display: flex; align-items: center; margin-left: auto; padding-right: 2px; }
.temp { width: 21px; font-size: 9px; margin: 0 16px 0 5px; }
.meet { margin: 0 7px; }
.meet + svg { margin-right: 4px; }
.clock { display: flex; flex-direction: column; align-items: center; width: 40px; line-height: 12px; margin: 0 11px 0 6px; }
.note { margin-right: 14px; }
```
FILE: app.js
```js
// Column letters with their widths; the last, unnamed column takes what is left.
const widths = [26, 114, 43, 18, 19, 19, 18, 19, 19, 18, 19, 19, 18, 19, 19, 42, 43,
                43, 42, 43, 43, 42, 43, 43, 42, 43, 43];
const letters = [...'ABCDEFGHIJKLMNOPQRSTUVWXYZ', 'AA'];
const ROWS = 35;

const students = [
  ['Raden Satrio Nugroho', 'K-1', '100100-1021-', '3', '92%'],
  ['Aliya Rohaity', 'K-1', '010110-01121', '4', '89%'],
  ['Corazon Ariyanti', 'K-1', '100100-002--', '2', '94%'],
  ['Tarjo Suro Guritno', 'K-1', '100101-012-2', '4', '89%'],
  ['Nurhasanah', 'K-2', '000101-10111', '3', '92%'],
  ['Reny Widiyati', 'K-2', '200000-012-1', '3', '92%'],
  ['Muhajir', 'K-2', '100000-021-2', '3', '92%'],
  ['Patrio Ranuharjo', 'K-2', '001010-00-11', '2', '94%'],
  ['Parman Santoso', 'K-2', '110010-0012-', '3', '92%'],
  ['Solikah', 'K-3', '000000-00---', '-', '100%'],
  ['Nurdin Halim', 'K-3', '000011-01-12', '3', '92%'],
  ['Denada Kausia', 'K-3', '1000001002--', '2', '94%']
];

const cells = {};
function put(col, row, text, cls = '', span = 1, rows = 1) {
  const start = letters.indexOf(col);
  for (let r = row; r < row + rows; r++)
    for (let c = start; c < start + span; c++) cells[c + ':' + r] = 'covered';
  cells[start + ':' + row] = { text, cls, span, rows };
}

put('A', 1, 'ADVANCED COMPUTER COURSE', 'heading', 17);
put('A', 2, 'REKAP KETIDAKHADIRAN TRIWULAN I TAHUN 2009', 'heading', 17);
for (const l of letters.slice(0, 17)) put(l, 3, '', 'topline');

put('A', 4, 'NO', 'box baseline', 1, 2);
put('B', 4, 'NAMA', 'box baseline', 1, 2);
put('C', 4, 'KELAS', 'box baseline', 1, 2);
put('D', 4, 'JULI', 'box blue', 3);
put('G', 4, 'AGUSTUS', 'box blue', 3);
put('J', 4, 'SEPTEMBER', 'box blue', 3);
put('M', 4, 'JUMLAH', 'box blue', 3);
put('P', 4, 'TOTAL', 'box left');
put('Q', 4, '% HADIR', 'box left');
[...'DEFGHIJKLMNO'].forEach((l, i) => put(l, 5, 'SIA'[i % 3], 'box blue baseline'));
put('P', 5, 'T-HADIR', 'box left baseline');
put('Q', 5, '', 'box baseline');

students.forEach(([name, klass, marks, total, pct], i) => {
  const row = 6 + i;
  put('A', row, i + 1, 'box');
  put('B', row, name, 'box left');
  put('C', row, klass, 'box');
  [...'DEFGHIJKLMNO'].forEach((l, k) =>
    put(l, row, marks[k], 'box blue' + ('JMNO'.includes(l) ? ' right' : '')));
  put('P', row, total, 'box right');
  put('Q', row, pct, 'box');
});

put('B', 19, 'Wajib Hadir', 'left');
put('C', 19, '36', 'right close');
put('D', 19, 'hari', 'left blue plain');
put('G', 19, 'REKAPITULASI KETIDAKHADIRAN', 'blue', 9);

[...'KLMNOP'].forEach(l => put(l, 20, '', 'edge-bottom'));
for (let r = 21; r < 25; r++) put('J', r, '', 'edge-right');
['NO', 'KLS', 'S', 'I', 'A', 'JUMLAH'].forEach((t, i) =>
  put('KLMNOP'[i], 21, t, 'box grey ' + (i < 5 ? 'blue' : 'left')));
[['1', 'K-1', 7, 3, 3, 13], ['2', 'K-2', 5, 4, 5, 14], ['3', 'K-3', 2, 1, 2, 5]].forEach((vals, r) =>
  vals.forEach((v, i) => put('KLMNOP'[i], 22 + r, v, 'box yellow' + (i > 1 ? ' right' : ''))));
put('B', 31, '', 'selected');

let html = '<colgroup><col style="width:17px">' +
  widths.map(w => `<col style="width:${w}px">`).join('') + '<col></colgroup>';
html += '<thead><tr><th class="corner"><i></i></th>' +
  letters.map(l => `<th scope="col"${l === 'B' ? ' class="hot"' : ''}>${l}</th>`).join('') +
  '<th></th></tr></thead><tbody>';
for (let r = 1; r <= ROWS; r++) {
  html += `<tr><th scope="row"${r === 31 ? ' class="hot"' : ''}>${r}</th>`;
  for (let c = 0; c <= letters.length; c++) {
    const cell = cells[c + ':' + r];
    if (cell === 'covered') continue;
    html += cell
      ? `<td class="${cell.cls}" colspan="${cell.span}" rowspan="${cell.rows}">${cell.text}</td>`
      : '<td></td>';
  }
  html += '</tr>';
}
document.getElementById('grid').innerHTML = html + '</tbody>';
```
